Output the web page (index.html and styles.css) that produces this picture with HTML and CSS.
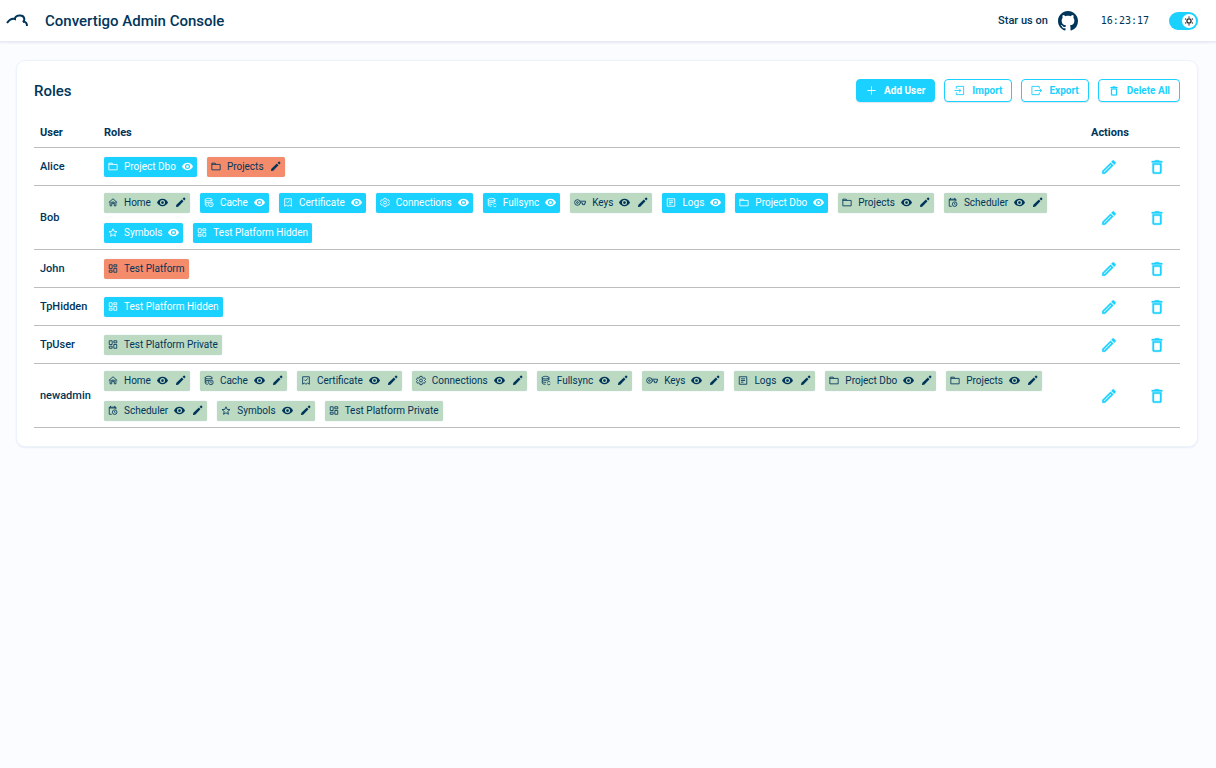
FILE: index.html
```html
<!DOCTYPE html>
<html lang="en">

<head>
    <meta charset="UTF-8">
    <meta name="viewport" content="width=device-width, initial-scale=1.0">
    <title>Convertigo Admin Console</title>
    <link rel="stylesheet" href="styles.css">
</head>

<body>
    <!-- Icon sprite -->
    <svg class="sprite" aria-hidden="true">
        <symbol id="i-folder" viewBox="0 0 24 24"><path d="M2 4h8l2 3h10v13H2z M2 7h10" /></symbol>
        <symbol id="i-home" viewBox="0 0 24 24"><path d="M2 12 12 3l10 9M5 10v10h4v-6h6v6h4V10M9 14v-3h6v3" /></symbol>
        <symbol id="i-cache" viewBox="0 0 24 24"><path d="M3 5c0-4 16-4 16 0s-16 4-16 0v13c0 2 3 3 6 3M3 9.500c1 3 7 3 9 2.500M3 14c1 2 4 2 5 2M19 5v4" /><circle cx="16.500" cy="16.500" r="5.500" /><path d="M16.500 13.500v3.500l2 1" /></symbol>
        <symbol id="i-certificate" viewBox="0 0 24 24"><path d="M4 3h16v18l-4-3-4 3-4-3-4 3zM8 10l3 3 5-6" /></symbol>
        <symbol id="i-connections" viewBox="0 0 24 24"><path d="M9.500 2h5l.7 3.200 2 1.200 3.200-1 2.400 4.200-2.500 2.400 2.500 2.400-2.400 4.200-3.200-1-2 1.200-.7 3.200h-5l-.7-3.200-2-1.200-3.200 1-2.400-4.200L3.700 12 1.200 9.600l2.400-4.200 3.200 1 2-1.200z" /><circle cx="12" cy="12" r="3.500" /></symbol>
        <symbol id="i-fullsync" viewBox="0 0 24 24"><path d="M3 5c0-4 16-4 16 0s-16 4-16 0v13c0 2 3 3 8 3M3 9.500c1 3 15 3 16 0M3 14c1 2 5 2.500 9 2.500M19 5v6M15 17c0-3 5-4 7-1M22 20c-1 3-5 3-7 0" /></symbol>
        <symbol id="i-keys" viewBox="0 0 28 24"><circle cx="8" cy="12" r="6.500" /><circle cx="8" cy="12" r="2" /><path d="M14 9h13v4h-2v4h-5v-4h-6" /></symbol>
        <symbol id="i-logs" viewBox="0 0 24 24"><path d="M3 3h18v18H3zM7 8h10M7 12h10M7 16h6" /></symbol>
        <symbol id="i-scheduler" viewBox="0 0 24 24"><path d="M9 21H3V4h16v5M3 6h16M6 1v4M16 1v4" /><circle cx="16" cy="16" r="5.500" /><path d="M16 13v3.500l2 1" /></symbol>
        <symbol id="i-symbols" viewBox="0 0 24 24"><path d="m12 3 2.700 6.200 6.800.6-5.200 4.500 1.600 6.700-5.900-3.500L6.100 21l1.600-6.700-5.200-4.500 6.800-.6z" /></symbol>
        <symbol id="i-platform" viewBox="0 0 24 24"><path d="M3 3h7v9H3zM14 3h7v5h-7zM14 12h7v9h-7zM3 16h7v5H3z" /></symbol>
        <symbol id="i-eye" viewBox="0 0 24 24"><path class="solid" d="M12 4C6.500 4 2 7.500 0 12c2 4.500 6.500 8 12 8s10-3.500 12-8c-2-4.500-6.500-8-12-8zm0 13.500a5.500 5.500 0 1 1 0-11 5.500 5.500 0 0 1 0 11zM12 9a3 3 0 1 0 0 6 3 3 0 0 0 0-6z" /></symbol>
        <symbol id="i-pencil" viewBox="0 0 24 24"><path class="solid" d="M2 22l1-5L15 5.500 18.500 9 7 21zM16.500 4 19 1.500c.6-.6 1.400-.6 2 0L22.500 3c.6.6.6 1.400 0 2L20 7.500z" /></symbol>
        <symbol id="i-edit" viewBox="0 0 24 24"><path class="solid heavy" d="m14.060 9.020.92.920L5.920 19H5v-.92zM17.660 3c-.25 0-.51.100-.7.290l-1.830 1.830 3.750 3.750 1.830-1.830a1 1 0 0 0 0-1.410l-2.340-2.340c-.2-.2-.45-.29-.71-.29m-3.600 3.190L3 17.250V21h3.750L17.810 9.940z" /></symbol>
        <symbol id="i-trash" viewBox="0 0 24 24"><path class="solid heavy" d="M6 19a2 2 0 0 0 2 2h8a2 2 0 0 0 2-2V7H6zM8 9h8v10H8zm7.500-5-1-1h-5l-1 1H5v2h14V4z" /></symbol>
        <symbol id="i-plus" viewBox="0 0 24 24"><path d="M12 3v18M3 12h18" /></symbol>
        <symbol id="i-import" viewBox="0 0 24 24"><path d="M5 8V3h16v18H5v-5M1 12h14M11 8l4 4-4 4" /></symbol>
        <symbol id="i-export" viewBox="0 0 24 24"><path d="M18 7V3H2v18h16v-4M8 12h15M19 8l4 4-4 4" /></symbol>
    </svg>

    <header class="topbar">
        <svg class="logo" viewBox="0 0 22 14" aria-hidden="true">
            <path d="M1 9C3 6 6 4 9 5c0-4 8-5 9-1 1 2 0 3-1 4 3-1 4 2 4 4" />
        </svg>
        <h1>Convertigo Admin Console</h1>
        <a class="star" href="#">
            Star us on
            <svg class="github" viewBox="0 0 16 16" aria-hidden="true"><path d="M8 0C3.580 0 0 3.580 0 8c0 3.540 2.290 6.530 5.470 7.590.4.070.55-.17.55-.38 0-.19-.01-.82-.01-1.490-2.010.37-2.530-.49-2.690-.94-.09-.23-.48-.94-.82-1.130-.28-.15-.68-.52-.01-.53.63-.01 1.080.58 1.230.82.72 1.210 1.870.87 2.330.66.070-.52.28-.87.51-1.070-1.780-.2-3.640-.89-3.640-3.950 0-.87.31-1.590.82-2.150-.08-.2-.36-1.020.08-2.120 0 0 .67-.21 2.200.82.64-.18 1.320-.27 2-.27s1.360.09 2 .27c1.530-1.040 2.200-.82 2.200-.82.44 1.100.16 1.920.08 2.120.51.56.82 1.270.82 2.150 0 3.070-1.870 3.750-3.650 3.950.29.25.54.73.54 1.480 0 1.070-.01 1.930-.01 2.200 0 .21.15.46.55.38A8 8 0 0 0 16 8c0-4.420-3.580-8-8-8z" /></svg>
        </a>
        <time class="clock">16:23:17</time>
        <label class="toggle">
            <input type="checkbox" aria-label="Light mode" checked>
            <span class="knob">
                <svg viewBox="0 0 24 24" aria-hidden="true"><circle cx="12" cy="12" r="5" /><path d="M12 1v3M12 20v3M2.500 6.500 5 8M19 16l2.500 1.500M2.500 17.500 5 16M19 8l2.500-1.500" /></svg>
            </span>
        </label>
    </header>

    <main class="card">
        <div class="card-header">
            <h2>Roles</h2>
            <div class="buttons">
                <button type="button" class="btn btn-primary"><svg aria-hidden="true"><use href="#i-plus" /></svg>Add User</button>
                <button type="button" class="btn"><svg aria-hidden="true"><use href="#i-import" /></svg>Import</button>
                <button type="button" class="btn"><svg aria-hidden="true"><use href="#i-export" /></svg>Export</button>
                <button type="button" class="btn btn-delete"><svg aria-hidden="true"><use href="#i-trash" /></svg>Delete All</button>
            </div>
        </div>

        <table class="roles-table">
            <thead>
                <tr>
                    <th class="col-user">User</th>
                    <th>Roles</th>
                    <th class="col-edit">Actions</th>
                    <th class="col-delete"></th>
                </tr>
            </thead>
            <tbody id="rolesList">
                <!-- Filled in by script.js -->
            </tbody>
        </table>
    </main>

    <script src="script.js"></script>
</body>

</html>
```
FILE: styles.css
```css
* {
    box-sizing: border-box;
}

body {
    margin: 0;
    background-color: #fbfcff;
    color: #00355a;
    font-family: Roboto, "Liberation Sans", sans-serif;
    font-size: 11px;
}

h1,
h2 {
    margin: 0;
    font-size: 15px;
    font-weight: 500;
}

svg {
    fill: none;
    stroke: currentColor;
    stroke-width: 2;
}

.solid {
    fill: currentColor;
    stroke: none;
}

.heavy {
    stroke: currentColor;
    stroke-width: 0.5;
}

.sprite {
    display: none;
}

/* Top bar */
.topbar {
    display: flex;
    align-items: center;
    height: 42px;
    padding: 0 18px 0 6px;
    background-color: #fff;
    border-bottom: 1px solid #e6eaf4;
    box-shadow: 0 1px 2px #e6eaf4;
}

.logo {
    width: 22px;
    height: 14px;
    margin-right: 17px;
}

.star {
    display: flex;
    align-items: center;
    gap: 10px;
    margin-left: auto;
    color: inherit;
    font-weight: 500;
    text-decoration: none;
}

.github {
    width: 20px;
    height: 20px;
    fill: currentColor;
    stroke: none;
}

.clock {
    margin: 0 20px 0 23px;
    font-family: "DejaVu Sans Mono", monospace;
    font-size: 10px;
}

.toggle {
    display: flex;
    justify-content: flex-end;
    width: 29px;
    height: 18px;
    padding: 2px;
    border-radius: 9px;
    background-color: #1ad1ff;
    cursor: pointer;
}

.toggle input {
    position: absolute;
    opacity: 0;
}

.knob {
    display: flex;
    align-items: center;
    justify-content: center;
    width: 14px;
    height: 14px;
    border-radius: 50%;
    background-color: #fff;
    color: #222;
}

.knob svg {
    width: 10px;
    height: 10px;
    stroke-width: 3;
}

/* Card */
.card {
    margin: 18px 18px 18px 16px;
    padding: 18px 17px;
    border: 1px solid #eef2fb;
    border-radius: 9px;
    background-color: #fff;
    box-shadow: 0 1px 2px #e6ecf5;
}

.card-header {
    display: flex;
    align-items: center;
    justify-content: space-between;
    height: 23px;
}

.buttons {
    display: flex;
    gap: 9px;
}

.btn {
    display: flex;
    align-items: center;
    gap: 7px;
    height: 23px;
    padding: 0 9px;
    border: 1px solid #1ad1ff;
    border-radius: 4px;
    background-color: #fff;
    color: #1ad1ff;
    font: 700 10px Roboto, "Liberation Sans", sans-serif;
    box-shadow: 0 1px 1px #e0e8ee;
    cursor: pointer;
}

.btn svg {
    width: 11px;
    height: 11px;
}

.btn-primary {
    background-color: #1ad1ff;
    color: #fff;
}

.btn-delete svg {
    width: 12px;
    height: 12px;
}

/* Roles table */
.roles-table {
    width: 100%;
    margin-top: 17px;
    border-collapse: collapse;
    table-layout: fixed;
}

.roles-table th {
    height: 28px;
    padding: 0 0 0 6px;
    text-align: left;
    font-weight: 700;
}

.roles-table td {
    height: 38px;
    padding: 7px 6px 6px;
    font-weight: 500;
}

.roles-table tr {
    border-bottom: 1px solid #bdbdbd;
}

.roles-table .col-user {
    width: 64px;
}

.roles-table .col-edit {
    width: 48px;
}

.roles-table .col-delete {
    width: 47px;
}

.chips {
    display: flex;
    flex-wrap: wrap;
    gap: 10px;
}

.chip {
    display: flex;
    align-items: center;
    gap: 6px;
    height: 20px;
    padding: 0 4px;
    border-radius: 2px;
    font-size: 10px;
    font-weight: 400;
    box-shadow: 0 0 1px #a9c4dc;
}

.chip svg {
    width: 10px;
    height: 11px;
    overflow: visible;
}

.chip .icon-eye,
.chip .icon-pencil {
    width: 11px;
}

.chip .icon-keys {
    width: 12px;
}

.chip .icon-eye + .icon-pencil {
    margin-left: 1px;
}

.chip-view {
    background-color: #1ad1ff;
    color: #fff;
}

.chip-edit {
    background-color: #f48c6c;
}

.chip-both {
    background-color: #bcd9c2;
}

.icon-btn {
    display: flex;
    margin: 0 auto;
    padding: 0;
    border: none;
    background: none;
    color: #1ad1ff;
    cursor: pointer;
}

.icon-btn svg {
    width: 18px;
    height: 18px;
}
```
FILE: script.js
```js
// [label, icon, kind, trailing icons]
const V = ['eye'];
const E = ['pencil'];
const VE = ['eye', 'pencil'];

const users = [
    { name: 'Alice', roles: [
        ['Project Dbo', 'folder', 'view', V],
        ['Projects', 'folder', 'edit', E]
    ] },
    { name: 'Bob', roles: [
        ['Home', 'home', 'both', VE],
        ['Cache', 'cache', 'view', V],
        ['Certificate', 'certificate', 'view', V],
        ['Connections', 'connections', 'view', V],
        ['Fullsync', 'fullsync', 'view', V],
        ['Keys', 'keys', 'both', VE],
        ['Logs', 'logs', 'view', V],
        ['Project Dbo', 'folder', 'view', V],
        ['Projects', 'folder', 'both', VE],
        ['Scheduler', 'scheduler', 'both', VE],
        ['Symbols', 'symbols', 'view', V],
        ['Test Platform Hidden', 'platform', 'view', []]
    ] },
    { name: 'John', roles: [['Test Platform', 'platform', 'edit', []]] },
    { name: 'TpHidden', roles: [['Test Platform Hidden', 'platform', 'view', []]] },
    { name: 'TpUser', roles: [['Test Platform Private', 'platform', 'both', []]] },
    { name: 'newadmin', roles: [
        ['Home', 'home', 'both', VE],
        ['Cache', 'cache', 'both', VE],
        ['Certificate', 'certificate', 'both', VE],
        ['Connections', 'connections', 'both', VE],
        ['Fullsync', 'fullsync', 'both', VE],
        ['Keys', 'keys', 'both', VE],
        ['Logs', 'logs', 'both', VE],
        ['Project Dbo', 'folder', 'both', VE],
        ['Projects', 'folder', 'both', VE],
        ['Scheduler', 'scheduler', 'both', VE],
        ['Symbols', 'symbols', 'both', VE],
        ['Test Platform Private', 'platform', 'both', []]
    ] }
];

function icon(name) {
    return `<svg class="icon-${name}" aria-hidden="true"><use href="#i-${name}" /></svg>`;
}

function renderChip([label, image, kind, marks]) {
    return `<span class="chip chip-${kind}">${icon(image)}<span>${label}</span>${marks.map(icon).join('')}</span>`;
}

// Render users table
document.getElementById('rolesList').innerHTML = users.map(user => `
    <tr>
        <td>${user.name}</td>
        <td><div class="chips">${user.roles.map(renderChip).join('')}</div></td>
        <td><button type="button" class="icon-btn" aria-label="Edit ${user.name}">${icon('edit')}</button></td>
        <td><button type="button" class="icon-btn" aria-label="Delete ${user.name}">${icon('trash')}</button></td>
    </tr>
`).join('');
```
